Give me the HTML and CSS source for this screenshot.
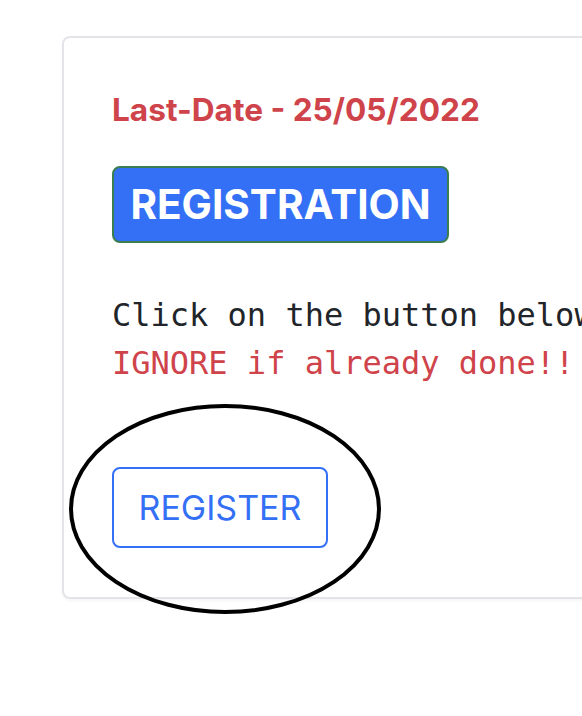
FILE: index.html
```html
<!DOCTYPE html>
<html>
<head>
<meta charset="utf-8">
<link rel="stylesheet" href="styles.css">
</head>
<body>
<div class="card">
  <div class="card-body">
    <h4 class="last-date">Last-Date - 25/05/2022</h4>
    <div class="badge">REGISTRATION</div>
    <p class="info">Click on the button below to register.<br><span class="ignore">IGNORE if already done!!</span></p>
    <a class="btn-register" href="#">REGISTER</a>
  </div>
</div>
<svg class="circle" width="314" height="212" viewBox="0 0 314 212">
  <ellipse cx="157" cy="106" rx="154" ry="103" fill="none" stroke="#000" stroke-width="4"/>
</svg>
</body>
</html>
```
FILE: styles.css
```css
html, body {
  margin: 0;
  padding: 0;
  overflow: hidden;
  background: #fff;
  width: 582px;
  height: 716px;
}
body {
  position: relative;
  font-family: Inter, "Liberation Sans", sans-serif;
}
.card {
  margin: 36px 0 0 62px;
  width: 640px;
  height: 559px;
  border: 2px solid #e2e4e8;
  border-radius: 8px;
  box-sizing: content-box;
  box-shadow: 0 2px 3px rgba(0,0,0,0.04);
}
.card-body {
  padding: 52px 0 0 48px;
  display: flex;
  flex-direction: column;
  align-items: flex-start;
}
.last-date {
  margin: 0;
  font-size: 31.6px;
  line-height: 40px;
  font-weight: 700;
  color: #cf434a;
  white-space: nowrap;
}
.badge {
  margin-top: 36px;
  width: 337px;
  height: 77px;
  box-sizing: border-box;
  background: #3470f5;
  border: 2px solid #3c7d50;
  border-radius: 8px;
  color: #fff;
  font-size: 40.5px;
  font-weight: 700;
  display: flex;
  align-items: center;
  justify-content: center;
}
.info {
  margin: 48px 0 0 0;
  font-family: "DejaVu Sans Mono", monospace;
  font-size: 32px;
  line-height: 48px;
  color: #212529;
  white-space: nowrap;
}
.ignore {
  color: #cf434a;
}
.btn-register {
  margin-top: 80px;
  width: 216px;
  height: 81px;
  box-sizing: border-box;
  border: 2px solid #3470f5;
  border-radius: 8px;
  color: #3470f5;
  text-decoration: none;
  font-size: 34px;
  font-weight: 400;
  display: flex;
  align-items: center;
  justify-content: center;
}
.circle {
  position: absolute;
  left: 68px;
  top: 403px;
}
```
